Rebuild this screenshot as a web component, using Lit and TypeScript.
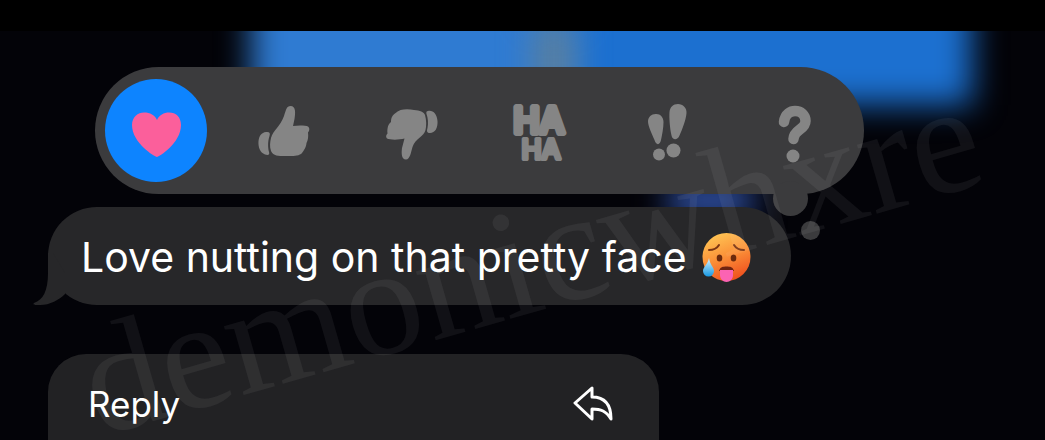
import { LitElement, html, css, svg } from "lit";
import { customElement, property, state } from "lit/decorators.js";

const icons: Record<string, unknown> = {
  Love: svg`<path fill="#fb5f9b" d="M31 56 C29 56 6 42 6 24 C6 16 12 11.500 18 11.500 C24 11.500 29 14 31 19 C33 14 38 11.500 43 11.500 C50 11.500 55 16 55 24 C55 42 33 56 31 56Z"/>`,
  Like: svg`<path d="M17 37 C19 29 26 26 30 15 C32 9 32.500 5 36.500 5 C42 5 41.500 12 40.500 18 L39 25 C45 24 52 24.500 54 25.500 C56 27 55.500 30 54 31.500 C54.500 36 54 39 52.500 42 C52 47 50 49 48 52 C45 55.500 38 55 31 55 C24 55 19.500 55 17 50 C15.500 46 16 41 17 37Z"/><path d="M12 31 C15.500 30.500 16.500 32 15.500 35 C13.500 41 14 47 15 51 C16 54 14 54.500 11 53.500 C6 51.500 4 46 4.500 40 C5 35 7.500 31.500 12 31Z"/>`,
  Dislike: svg`<path d="M43.500 29 C42 36 33.500 37 30.500 46 C29 51 28 58.500 24 58.500 C19 58.500 19.500 51 20 47 L22.500 37.500 C17 39 8 39 5 37.500 C3.500 36 4 34 5.500 32.500 C5 28 6 23 9 21 C9 16 11 14 13 12.500 C18 7.500 26 8 32 9 C38 9.500 42 11 43 14 C44.500 19 44.500 25 43.500 29Z"/><path d="M46 10 C51 9 55 13 55.500 20 C56 27 53 32 48 32 C45 32 44.500 30.500 45.500 27 C46.500 22 46 17 44.500 13 C44 11 44.500 10 46 10Z"/>`,
  Haha: svg`<g class="laugh"><text x="29" y="32" stroke-width="6" font-size="35">HA</text><text x="31" y="58" stroke-width="4" font-size="27">HA</text></g>`,
  Emphasize: svg`<path d="M17.500 13 C22 12.500 25.500 16 25.500 21 C25.500 27 24 34 23 39 C22 44.500 18 44.500 16.500 39 C14 33 10 25 10 20.500 C10 16 13.500 13 17.500 13Z"/><path d="M40 3 C45 3 49 7 48.500 12 C48 19 44 29 41.500 34.500 C39.500 39.500 34.500 39.500 33.500 34.500 C32 28 31 17 31.500 11 C32 6 35 3 40 3Z"/><circle cx="21" cy="53.500" r="6"/><circle cx="35.500" cy="49.500" r="7"/>`,
  Question: svg`<path fill="none" stroke="#858585" stroke-width="10.500" stroke-linecap="round" stroke-linejoin="round" d="M18 21 C19 12.500 25 10 29 10 C35 10 39.500 14 39.500 20 C39.500 29 28 28 27.500 38"/><circle cx="27" cy="55" r="6.500"/>`,
};

@customElement("reaction-bar")
export class ReactionBar extends LitElement {
  @state() private selected = "Love";

  static styles = css`
    :host {
      display: flex;
      position: relative;
      width: fit-content;
      align-items: center;
      gap: 26px;
      padding: 12px 17px 12px 10px;
      border-radius: 64px;
      background: #3b3b3d;
    }
    button {
      display: grid;
      place-items: center;
      width: 102px;
      height: 103px;
      padding: 0;
      border: 0;
      border-radius: 50%;
      background: none;
      cursor: pointer;
    }
    .on { background: #0d84ff; }
    svg { width: 60px; height: 60px; fill: #858585; overflow: visible; }
    .laugh {
      font-family: Inter, sans-serif;
      font-weight: 500;
      text-anchor: middle;
      stroke: #858585;
      stroke-linejoin: round;
      stroke-linecap: round;
    }
    .dot { position: absolute; border-radius: 50%; background: #3b3b3d; }
    .large { width: 35px; height: 35px; right: 56px; bottom: -22px; }
    .small { width: 19px; height: 19px; right: 44px; bottom: -46px; }
  `;

  render() {
    return html`
      ${Object.keys(icons).map(
        (name) => html`<button
          class=${this.selected === name ? "on" : ""}
          aria-label=${name}
          aria-pressed=${this.selected === name}
          @click=${() => (this.selected = name)}
        ><svg viewBox="0 0 60 60" aria-hidden="true">${icons[name]}</svg></button>`
      )}
      <span class="dot large"></span>
      <span class="dot small"></span>
    `;
  }
}

@customElement("message-bubble")
export class MessageBubble extends LitElement {
  @property() text = "";

  static styles = css`
    :host {
      display: flex;
      position: relative;
      width: fit-content;
      align-items: center;
      gap: 14px;
      height: 98px;
      box-sizing: border-box;
      padding: 2px 40px 0 33px;
      border-radius: 49px;
      background: #272729;
      color: #fff;
      font: 400 41px/50px Inter, sans-serif;
    }
    p { margin: 0; white-space: nowrap; }
    .tail { position: absolute; left: -15px; bottom: 0; width: 32px; height: 52px; fill: #272729; }
    .face { width: 50px; height: 52px; flex: none; }
  `;

  render() {
    return html`
      <svg class="tail" viewBox="0 0 32 52" aria-hidden="true">
        <path d="M15 0 V20 C15 38 10 47 1 50 C-1 52 3 52 7 52 C17 52 26 47 32 41 V20 L20 0Z"/>
      </svg>
      <p>${this.text}</p>
      <svg class="face" viewBox="0 0 50 52" role="img" aria-label="Hot face">
        <defs>
          <linearGradient id="skin" x1=".35" y1="0" x2=".75" y2="1">
            <stop offset="0" stop-color="#ffc353"/>
            <stop offset=".45" stop-color="#fb9239"/>
            <stop offset="1" stop-color="#ee4a1c"/>
          </linearGradient>
          <linearGradient id="sweat" x2="0" y2="1">
            <stop offset="0" stop-color="#d8f4ff"/>
            <stop offset="1" stop-color="#1799e3"/>
          </linearGradient>
        </defs>
        <circle cx="25.500" cy="26" r="24" fill="url(#skin)"/>
        <g fill="none" stroke="#7c3512" stroke-width="2" stroke-linecap="round">
          <path d="M8 19 Q15 19 18 14"/><path d="M33 14 Q36 19 43 19"/>
        </g>
        <ellipse cx="18.500" cy="27" rx="2.800" ry="3.500" fill="#6b2a0d"/>
        <ellipse cx="32.500" cy="27" rx="2.800" ry="3.500" fill="#6b2a0d"/>
        <path fill="#702411" d="M18 40 C19 36 22 35.500 25.500 35.500 C29 35.500 32 36 33 40Z"/>
        <path fill="#fb63b3" d="M19 39 H32 V44 C32 48 29 51 25.500 51 C22 51 19 48 19 44Z"/>
        <path fill="url(#sweat)" d="M8 27 C9 34 13 36 13 40 A5.500 5.500 0 0 1 2 40 C2 36 7 33 8 27Z"/>
      </svg>
    `;
  }
}

@customElement("app-root")
export class AppRoot extends LitElement {
  static styles = css`
    :host {
      display: flex;
      flex-direction: column;
      position: relative;
      height: 100vh;
      overflow: hidden;
      background: #030308;
      font-family: Inter, sans-serif;
    }
    .status { flex: none; height: 31px; background: #000; position: relative; z-index: 1; }
    .glow { position: absolute; filter: blur(16px); }
    .left { left: 24%; width: 38%; top: -30px; height: 170px; background: #2f7bd2; }
    .right { left: 55%; right: 7%; top: -30px; height: 135px; background: #1c70d0; }
    .smudge { left: 51%; width: 4%; top: 20px; height: 80px; background: #587fa0; }
    .indigo { left: 64%; width: 8%; top: 182px; height: 36px; background: #3153a8; }
    main {
      position: relative;
      flex: 1;
      display: flex;
      flex-direction: column;
      align-items: flex-start;
      padding: 36px 16px 0 48px;
    }
    reaction-bar { margin-left: 47px; z-index: 1; }
    message-bubble { margin: 13px 0 49px; }
    .menu {
      flex: 1;
      width: 100%;
      max-width: 611px;
      border-radius: 38px 38px 0 0;
      background: #222224;
    }
    .reply {
      display: flex;
      width: 100%;
      height: 100px;
      align-items: center;
      justify-content: space-between;
      padding: 0 46px 0 40px;
      border: 0;
      background: none;
      color: #fff;
      font: 400 35px/44px Inter, sans-serif;
      cursor: pointer;
    }
    .reply svg { width: 40px; height: 36px; fill: none; stroke: #fff; stroke-width: 3; stroke-linejoin: round; }
    .watermark {
      position: absolute;
      z-index: 2;
      left: 104px;
      bottom: -14px;
      font: 156px/140px "Liberation Serif", serif;
      color: rgba(255, 255, 255, 0.06);
      transform: rotate(-16deg);
      transform-origin: 0 100%;
      pointer-events: none;
      user-select: none;
    }
  `;

  render() {
    return html`
      <div class="glow left"></div>
      <div class="glow right"></div>
      <div class="glow smudge"></div>
      <div class="glow indigo"></div>
      <div class="status"></div>
      <main>
        <reaction-bar></reaction-bar>
        <message-bubble text="Love nutting on that pretty face"></message-bubble>
        <div class="menu">
          <button class="reply">
            Reply
            <svg viewBox="0 0 40 36" aria-hidden="true">
              <path d="M2 17 L19 2 V11 C33 11 38 20 38 33 C33 25 28 23 19 23 V33Z"/>
            </svg>
          </button>
        </div>
      </main>
      <div class="watermark">demonicwhxre</div>
    `;
  }
}
